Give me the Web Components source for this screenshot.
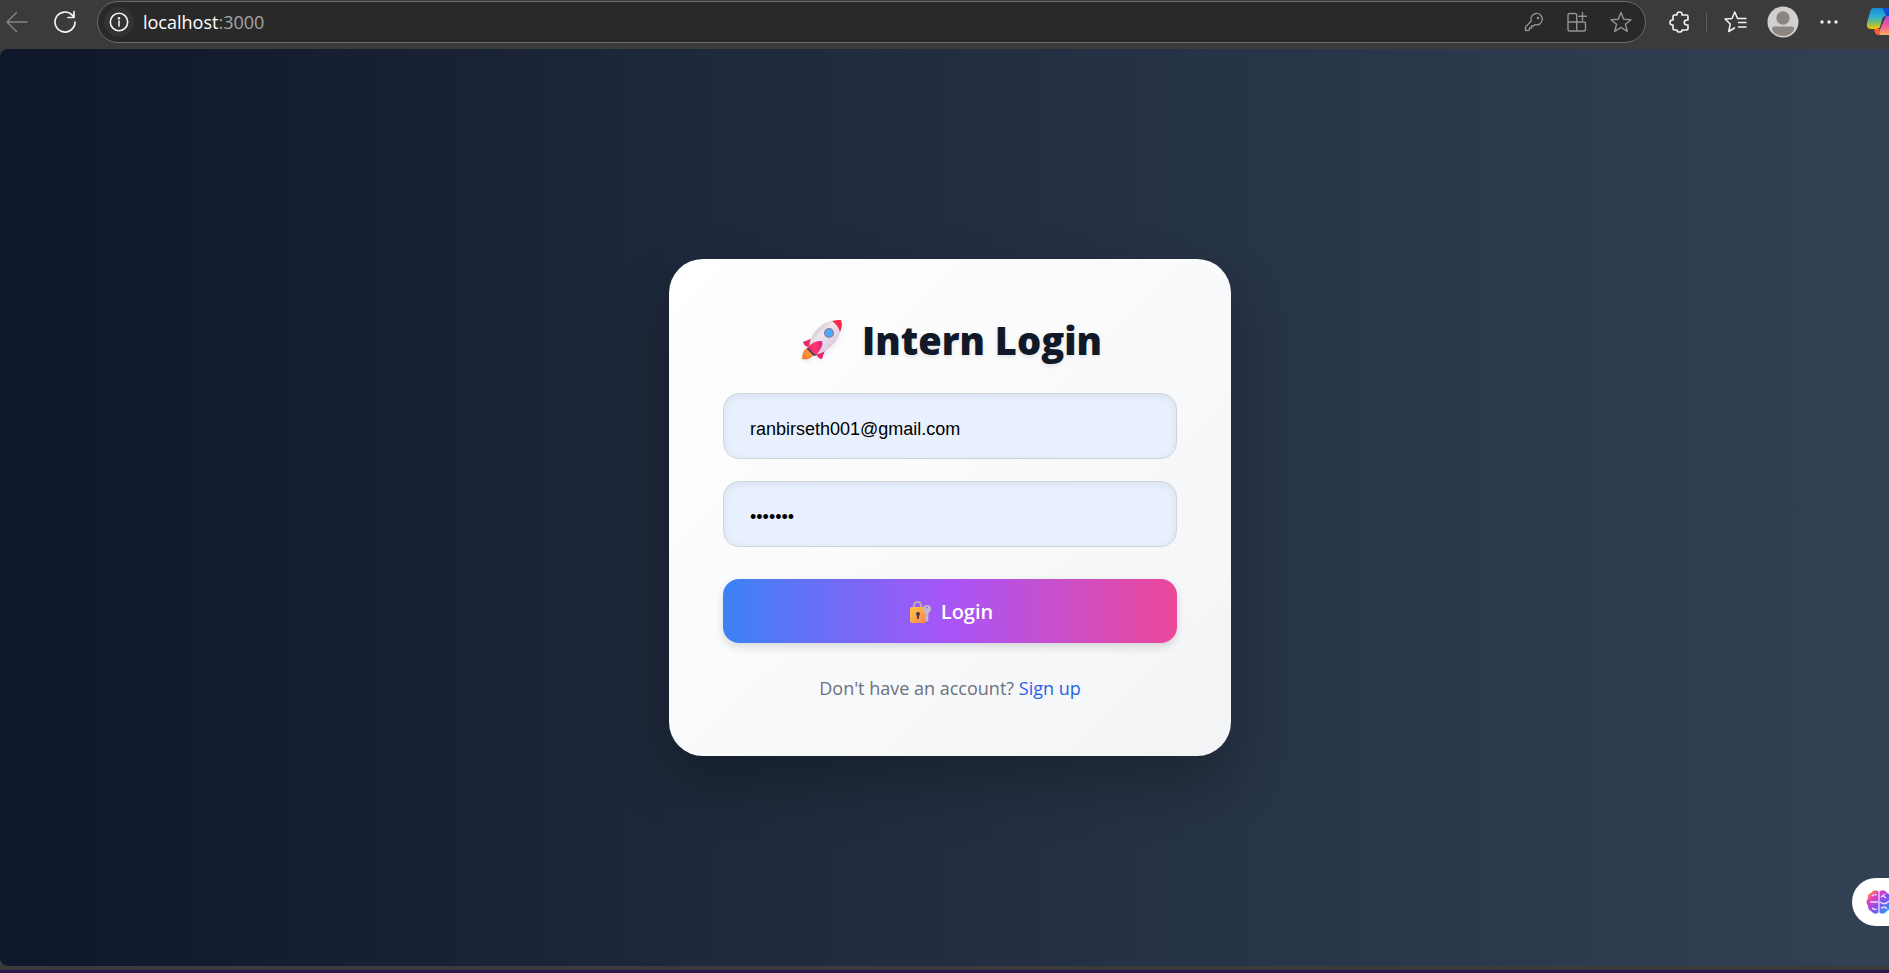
<!DOCTYPE html>
<html lang="en">
<head>
<meta charset="utf-8">
<title>Intern Login</title>
<style>
html, body { margin: 0; min-height: 100%; }
body { background: #3b3b3b; font-family: "Open Sans", "Noto Sans", sans-serif; }
</style>
</head>
<body>
<app-window></app-window>
<script>
const define = (name, html, init) => {
  const template = document.createElement('template');
  template.innerHTML = html;
  customElements.define(name, class extends HTMLElement {
    constructor() {
      super();
      this.attachShadow({ mode: 'open' }).append(template.content.cloneNode(true));
      if (init) init.call(this, this.shadowRoot);
    }
  });
};

const icons = {
  back: `<svg width="22" height="22" viewBox="0 0 22 22" stroke="#858585" stroke-width="1.400"><path d="M21 11H1M10.500 1.500L1 11l9.500 9.500"/></svg>`,
  reload: `<svg width="24" height="24" viewBox="0 0 24 24" stroke="#f4f4f4" stroke-width="1.700"><path d="M22 12A10 10 0 1 1 19.500 5.400L21 7M21 1.500V7.500H15"/></svg>`,
  info: `<svg width="20" height="20" viewBox="0 0 20 20" stroke="#f4f4f4" stroke-width="1.600"><circle cx="10" cy="10" r="8.700"/><path d="M10 9v5"/><circle cx="10" cy="6.300" r=".5" fill="#fff"/></svg>`,
  key: `<svg width="20" height="20" viewBox="0 0 20 20" stroke="#929292" stroke-width="1.400"><path d="M7.200 9A5.700 5.700 0 1 1 11 12.600L9.500 14H7.500v2H5.500v1.500L4.500 18.500H1.500V15Z"/><circle cx="14" cy="6" r="1.300" fill="#929292" stroke="none"/></svg>`,
  apps: `<svg width="20" height="20" viewBox="0 0 20 20" stroke="#929292" stroke-width="1.400"><path d="M9.700 10V3Q9.700 1.500 8.200 1.500H2.500Q1 1.500 1 3V17.500Q1 19 2.500 19H17Q18.500 19 18.500 17.500V11.500Q18.500 10 17 10H1M9.700 10V19M15.500 .5V8M11.800 4.200H19.500"/></svg>`,
  star: `<svg width="22" height="22" viewBox="0 0 22 22" stroke="#929292" stroke-width="1.400"><path d="M11 1.500L13.700 8.200L21 8.700L15.400 13.200L17.300 20.300L11 16.400L4.700 20.300L6.600 13.200L1 8.700L8.300 8.200Z"/></svg>`,
  puzzle: `<svg width="22" height="22" viewBox="0 0 22 22" stroke="#f4f4f4" stroke-width="1.600"><path d="M8 4V3.200Q8 1 10.500 1T13 3.200V4H17.500Q19 4 19 5.500V9H18Q15.300 9 15.300 11.500T18 14H19V17.500Q19 19 17.500 19H13V19.200Q13 21 10.500 21T8 19.200V19H5.500Q4 19 4 17.500V14H3.200Q1 14 1 11.500T3.200 9H4V5.500Q4 4 5.500 4Z"/></svg>`,
  favorites: `<svg width="23" height="22" viewBox="0 0 23 22" stroke="#f4f4f4" stroke-width="1.500"><path d="M20 7.500H13.500L10.800 1L8 7.500L1 8L6.300 13L4.700 20.500L10.500 17M14.500 11.500H22M14.500 7.500H22M14.500 16H22"/></svg>`,
  profile: `<svg width="32" height="32" viewBox="0 0 32 32" stroke="none"><circle cx="16" cy="16" r="15.500" fill="#d2d0ce"/><circle cx="16" cy="12" r="6.700" fill="#8b8681"/><path fill="#8b8681" d="M7.500 20.500H24.500Q27.500 20.500 27 24A13 13 0 0 1 5 24Q4.500 20.500 7.500 20.500"/></svg>`,
  more: `<svg width="20" height="6" viewBox="0 0 20 6" stroke="none"><g fill="#eee"><circle cx="3" cy="3" r="1.700"/><circle cx="10" cy="3" r="1.700"/><circle cx="17" cy="3" r="1.700"/></g></svg>`,
  copilot: `<svg width="32" height="30" viewBox="0 0 32 30" stroke="none"><defs><linearGradient id="a" x2="0" y2="1"><stop stop-color="#168dd8"/><stop offset=".4" stop-color="#2baed4"/><stop offset=".7" stop-color="#79bd68"/><stop offset="1" stop-color="#f6c700"/></linearGradient><linearGradient id="b" x2="0" y2="1"><stop stop-color="#a84ce0"/><stop offset=".5" stop-color="#ef5897"/><stop offset="1" stop-color="#ffac62"/></linearGradient></defs><path fill="url(#a)" d="M8 1H20Q24 1 25 5L26 9H20Q17 9 16 13L14 20Q13 22 9 22H5Q0 22 1 16L4 5Q5 1 8 1"/><path fill="#1649cf" d="M15 1H20Q24 1 25 5L26 9H20L18 4Q17 1 15 1"/><path fill="url(#b)" d="M20 9H28Q32 9 31 15L28 24Q27 28 22 28H12L15 20Z"/><path fill="#f35f32" d="M8 22H14Q12 26 15 28H12Q9 28 8 22"/></svg>`,
};

define('ui-icon', `<style>:host{display:block;flex:none}svg{display:block;fill:none;stroke-linecap:round;stroke-linejoin:round}</style>`, function (root) {
  const name = this.getAttribute('name');
  root.innerHTML += icons[name] || '';
});

define('tool-button', `<style>
:host{display:flex;flex:none}
button{display:flex;align-items:center;justify-content:center;padding:0;border:0;background:none}
</style><button type="button"><slot></slot></button>`, function (root) {
  root.querySelector('button').setAttribute('aria-label', this.getAttribute('label'));
});

define('address-bar', `<style>
:host{display:flex;flex:1;align-items:center;box-sizing:border-box;height:42px;padding:0 13px 0 6px;border:1px solid #6b6b6b;border-radius:21px;background:#292929;min-width:0}
.info{display:flex;align-items:center;justify-content:center;width:30px;height:30px;border-radius:15px;background:#333}
.url{flex:1;margin-left:9px;font-size:18px;line-height:24px;color:#fff}
.url span{color:#a5a5a5}
.actions{display:flex;align-items:center;gap:23px}
</style>
<div class="info"><ui-icon name="info"></ui-icon></div>
<div class="url">localhost<span>:3000</span></div>
<div class="actions">
<tool-button label="Saved passwords"><ui-icon name="key"></ui-icon></tool-button>
<tool-button label="Add app"><ui-icon name="apps"></ui-icon></tool-button>
<tool-button label="Add to favorites"><ui-icon name="star"></ui-icon></tool-button>
</div>`);

define('browser-bar', `<style>
:host{display:flex;align-items:center;box-sizing:border-box;height:49px;padding:0 0 5px 6px;background:#3b3b3b;overflow:hidden}
.nav{display:flex;align-items:center;gap:25px;margin-right:20px}
.tools{display:flex;align-items:center;margin-left:23px;margin-right:-9px}
.line{width:1px;height:20px;margin:0 17px 0 15px;background:#5c5c5c}
.wide{display:flex;align-items:center;gap:20px}
.wide tool-button:last-child{margin-left:7px}
</style>
<div class="nav"><tool-button label="Back"><ui-icon name="back"></ui-icon></tool-button><tool-button label="Reload"><ui-icon name="reload"></ui-icon></tool-button></div>
<address-bar></address-bar>
<div class="tools"><tool-button label="Extensions"><ui-icon name="puzzle"></ui-icon></tool-button><div class="line"></div>
<div class="wide"><tool-button label="Favorites"><ui-icon name="favorites"></ui-icon></tool-button><tool-button label="Profile"><ui-icon name="profile"></ui-icon></tool-button><tool-button label="More"><ui-icon name="more"></ui-icon></tool-button><tool-button label="Copilot"><ui-icon name="copilot"></ui-icon></tool-button></div></div>`);

define('rocket-art', `<style>:host{display:block;flex:none;filter:drop-shadow(0 2px 2px #0001)}svg{display:block}</style>
<svg width="40" height="40" viewBox="0 0 40 40"><defs><linearGradient id="body" x1=".2" y1=".2" x2=".8" y2=".8"><stop stop-color="#cfc8cc"/><stop offset=".35" stop-color="#f0e6ef"/><stop offset="1" stop-color="#d8c4de"/></linearGradient><linearGradient id="fin" x2="1"><stop stop-color="#e82063"/><stop offset=".5" stop-color="#ff3a72"/><stop offset="1" stop-color="#e61b78"/></linearGradient><radialGradient id="fire"><stop stop-color="#ff9b35"/><stop offset="1" stop-color="#f37c32"/></radialGradient></defs>
<path fill="url(#fire)" d="M5 28Q0 31 0 39Q8 41 12 34Z"/><path fill="url(#fin)" d="M11 18L1 22Q2 27 8 27ZM23 30L20 39Q16 39 14 34Z"/><path fill="#443568" d="M6 27L15 35L12 36L5 29Z"/>
<path fill="url(#body)" d="M7 28Q8 13 20 5Q27 0 36 0Q41 0 40 7Q37 22 23 31Q19 34 13 34Z"/><path fill="#f62743" d="M30 1Q35 0 39 0Q41 5 38 12Q36 5 30 1"/><circle cx="27" cy="13" r="5" fill="#8c7e91"/><circle cx="27" cy="13" r="3.700" fill="#4dabff"/><path fill="url(#fin)" d="M6 28Q11 20 20 21Q22 26 14 35Z"/></svg>`);

define('lock-art', `<style>:host{display:block;flex:none}svg{display:block}</style>
<svg width="22" height="22" viewBox="0 0 22 22"><defs><linearGradient id="lock" x2="1" y2="1"><stop stop-color="#ffc843"/><stop offset="1" stop-color="#f7854d"/></linearGradient></defs><path d="M5 7V5Q5 1 8.500 1T12 5V7" fill="none" stroke="#bba5bb" stroke-width="2"/><rect x="1" y="6" width="16" height="16" rx="2" fill="url(#lock)"/><circle cx="9" cy="13" r="2" fill="#4d3b52"/><path d="M9 13V17" stroke="#4d3b52" stroke-width="2" stroke-linecap="round"/><circle cx="18" cy="8" r="4" fill="#c4b8d0"/><path d="M16.500 10V19L18 21L19.500 19V17L18.800 16L19.500 15V10Z" fill="#c4b8d0"/><circle cx="18" cy="6.500" r="1" fill="#a165d9"/></svg>`);

define('text-field', `<style>
:host{display:block}
input{display:block;box-sizing:border-box;width:100%;height:66px;padding:6px 26px 0;border:1px solid #d1d5db;border-radius:16px;outline:0;background:#e8f0fe;box-shadow:inset 0 2px 8px #00000012;color:#000;font:18px "Liberation Sans",sans-serif}
</style><input>`, function (root) {
  const input = root.querySelector('input');
  input.type = this.getAttribute('type');
  input.value = this.getAttribute('value');
  input.setAttribute('aria-label', this.getAttribute('label'));
});

define('login-card', `<style>
:host{display:block;box-sizing:border-box;width:100%;max-width:562px;padding:54px;border-radius:34px;background:linear-gradient(135deg,#fff,#f9fafb 50%,#f3f4f6);box-shadow:0 28px 56px #00000040}
h1{display:flex;align-items:center;justify-content:center;gap:20px;margin:0 0 26px;padding-left:4px;font-size:38px;line-height:54px;font-weight:800;color:#111827;text-shadow:0 2px 4px #0000001a}
form{display:flex;flex-direction:column;gap:22px}
button{display:flex;align-items:center;justify-content:center;gap:10px;height:64px;margin-top:10px;border:0;border-radius:16px;background:linear-gradient(90deg,#3b82f6,#a855f7 50%,#ec4899);box-shadow:0 4px 8px #0002;color:#fff;font:600 20px/28px "Open Sans",sans-serif;padding:2px 0 0 2px}
p{margin:31px 0 0;text-align:center;font-size:18px;line-height:28px;color:#6b7280}
a{color:#2563eb;text-decoration:none}
</style>
<h1><rocket-art></rocket-art>Intern Login</h1>
<form><text-field type="email" label="Email" value="ranbirseth001@gmail.com"></text-field><text-field type="password" label="Password" value="example"></text-field><button type="button"><lock-art></lock-art>Login</button></form>
<p>Don't have an account? <a href="#signup">Sign up</a></p>`);

define('brain-tab', `<style>
:host{display:block}
button{display:flex;align-items:center;box-sizing:border-box;width:37px;height:48px;padding:0 0 0 14px;border:0;border-radius:24px 0 0 24px;background:#fff;overflow:hidden}
svg{flex:none}
</style><button type="button" aria-label="Assistant"><svg width="26" height="24" viewBox="0 0 26 24"><defs><linearGradient id="g" x2="1" y2="1"><stop stop-color="#ff9f28"/><stop offset=".08" stop-color="#ff9f28"/><stop offset=".28" stop-color="#e83cc0"/><stop offset=".55" stop-color="#8052ee"/><stop offset="1" stop-color="#0cb7ff"/></linearGradient></defs><path fill="url(#g)" d="M12 1Q7-1 5 3Q1 4 2 8Q-1 12 2 16Q2 20 5 21Q8 25 12 23L13 22L14 23Q18 25 21 21Q24 20 24 16Q27 12 24 8Q25 4 21 3Q19-1 14 1L13 2Z"/><path d="M13 1V23M4 12H12M6 6Q8 4 11 5M6 18Q8 20 11 19M15 7L19 4M17 6L20 8M14 12Q19 16 23 11M15 18L19 17L21 19" fill="none" stroke="#eddcff" stroke-width="1.300"/></svg></button>`);

define('app-window', `<style>
:host{display:flex;flex-direction:column;min-height:100vh}
main{position:relative;flex:1;display:flex;align-items:center;justify-content:center;padding:24px;border-radius:8px 0 0 8px;background:linear-gradient(90deg,#0f172a,#1e293b 38%,#334155);padding-right:13px}
main{padding-left:24px}
brain-tab{position:absolute;right:0;bottom:40px}
footer{height:7px;box-sizing:border-box;background:#3b3b3b;border-bottom:3px solid #29184d}
</style><browser-bar></browser-bar><main><login-card></login-card><brain-tab></brain-tab></main><footer></footer>`);
</script>
</body>
</html>
